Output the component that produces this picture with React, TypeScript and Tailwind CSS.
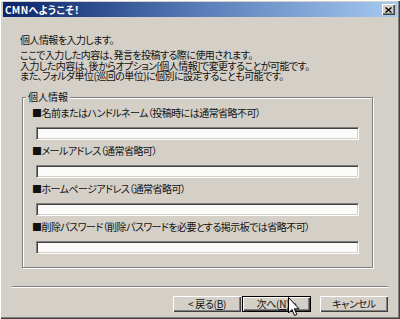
import React from 'react';

const jp = { fontFamily: '"Noto Sans CJK JP", "MS PGothic", sans-serif', fontFeatureSettings: '"palt"' };

function Field({ label }: { label: string }) {
    return (
        <div className="flex flex-col">
            <div className="h-[14px] leading-[14px] whitespace-nowrap tracking-[-0.55px]">{label}</div>
            <div className="mt-[7px] ml-[4px] w-[323px] h-[13px] bg-[#fbfbf9] border border-t-[#808080] border-l-[#808080] border-b-white border-r-white shadow-[inset_1px_1px_0_#404040,inset_-1px_-1px_0_#d4d0c8]" />
        </div>
    );
}

function Button({ children, isDefault }: { children: React.ReactNode; isDefault?: boolean }) {
    return (
        <div
            className={
                'h-[16px] flex items-center justify-center bg-[#d4d0c8] text-[10px] tracking-[-0.3px] ' +
                (isDefault
                    ? 'w-[69px] border border-black shadow-[inset_1px_1px_0_#ffffff,inset_-1px_-1px_0_#404040,inset_-2px_-2px_0_#808080]'
                    : 'w-[68px] shadow-[inset_1px_1px_0_#ffffff,inset_-1px_-1px_0_#404040,inset_-2px_-2px_0_#808080]')
            }
        >
            {children}
        </div>
    );
}

export default function App() {
    return (
        <div
            className="relative w-[400px] h-[319px] bg-[#d4d0c8] text-[10px] text-[#111] px-[3px] pt-[2px] shadow-[inset_1px_1px_0_#ffffff,inset_-1px_-1px_0_#404040,inset_-2px_-2px_0_#808080] overflow-hidden"
            style={jp}
        >
            {/* title bar */}
            <div className="h-[15px] flex items-center justify-between bg-linear-to-r from-[#0a246a] via-[#5a7cb8] to-[#a6caf0] pl-[2px] pr-[2px]">
                <span className="text-white font-bold text-[10px] leading-none tracking-[0.3px]">CMNへようこそ！</span>
                <div className="w-[13px] h-[11px] bg-[#d4d0c8] flex items-center justify-center shadow-[inset_1px_1px_0_#ffffff,inset_-1px_-1px_0_#404040,inset_-2px_-2px_0_#808080]">
                    <svg width="7" height="6" viewBox="0 0 7 6">
                        <path d="M0.5 0.5 L6.5 5.5 M6.5 0.5 L0.5 5.5" stroke="#000" strokeWidth="1.4" />
                    </svg>
                </div>
            </div>

            {/* intro */}
            <div className="pl-[17px] mt-[17px] leading-[12px] tracking-[-0.55px]">個人情報を入力します。</div>
            <div className="pl-[17px] mt-[4px] leading-[10.5px] tracking-[-0.55px]">
                <div>ここで入力した内容は、発言を投稿する際に使用されます。</div>
                <div>入力した内容は、後からオプション[個人情報]で変更することが可能です。</div>
                <div>また、フォルダ単位(巡回の単位)に個別に設定することも可能です。</div>
            </div>

            {/* group box */}
            <div className="relative ml-[19px] mt-[15px] w-[351px] h-[171px] border border-[#808080] shadow-[1px_1px_0_#ffffff,inset_1px_1px_0_#ffffff] pt-[8px] pl-[9px] flex flex-col gap-[4px]">
                <span className="absolute -top-[7px] left-[3px] px-[2px] bg-[#d4d0c8] leading-[12px]">個人情報</span>
                <Field label="■名前またはハンドルネーム（投稿時には通常省略不可）" />
                <Field label="■メールアドレス（通常省略可）" />
                <Field label="■ホームページアドレス（通常省略可）" />
                <Field label="■削除パスワード（削除パスワードを必要とする掲示板では省略不可）" />
            </div>

            {/* separator */}
            <div className="ml-[9px] mt-[18px] w-[376px] h-[2px] border-t border-t-[#808080] border-b border-b-white" />

            {/* buttons */}
            <div className="mt-[8px] flex pl-[170px]">
                <Button>
                    <span className="w-[63px] text-center">&lt; 戻る(<u>B</u>)</span>
                </Button>
                <div className="w-[1px]" />
                <Button isDefault>
                    次へ(<u>N</u>) &gt;
                </Button>
                <div className="w-[9px]" />
                <Button>キャンセル</Button>
            </div>

            {/* mouse pointer */}
            <svg className="absolute left-[288px] top-[297px]" width="12" height="20" viewBox="0 0 12 20">
                <path d="M0.5 0.5 L0.5 16 L4 12.5 L6.5 18.5 L8.8 17.5 L6.3 11.8 L11 11.8 Z" fill="#fff" stroke="#000" strokeWidth="1" strokeLinejoin="miter" />
            </svg>
        </div>
    );
}
